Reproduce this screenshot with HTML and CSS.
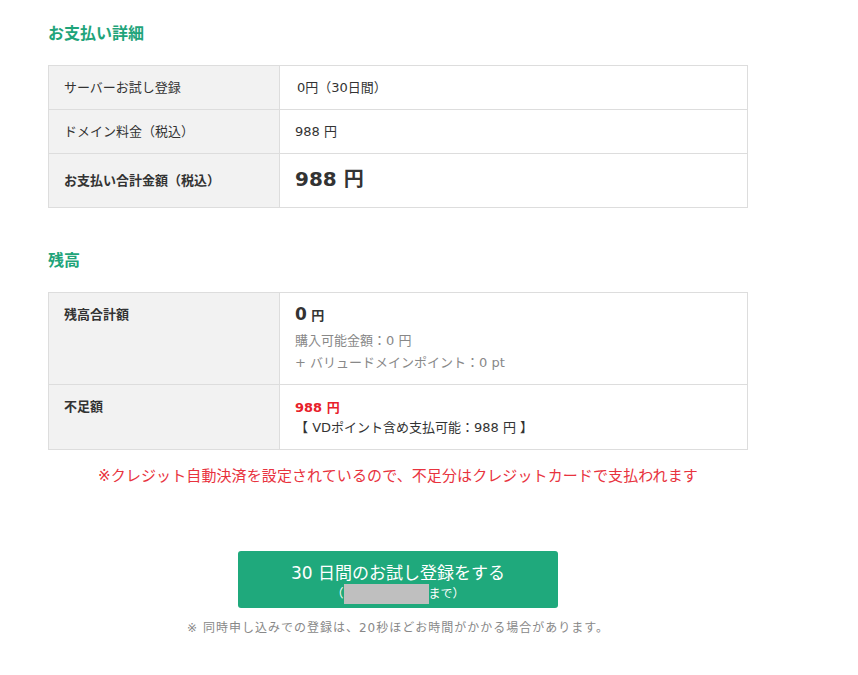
FILE: index.html
```html
<!DOCTYPE html>
<html lang="ja">
<head>
    <meta charset="UTF-8">
    <meta name="viewport" content="width=device-width, initial-scale=1.0">
    <title>お支払い詳細</title>
    <link rel="stylesheet" href="styles.css">
</head>
<body>
    <div class="container">
        <h2 class="section-title">お支払い詳細</h2>
        <table class="detail-table">
            <tr>
                <th>サーバーお試し登録</th>
                <td><span class="trial">0円（30日間）</span></td>
            </tr>
            <tr>
                <th>ドメイン料金（税込）</th>
                <td>988 円</td>
            </tr>
            <tr class="total-row">
                <th class="strong">お支払い合計金額（税込）</th>
                <td><span class="total">988 円</span></td>
            </tr>
        </table>

        <h2 class="section-title balance-title">残高</h2>
        <table class="detail-table balance-table">
            <tr>
                <th class="strong top">残高合計額</th>
                <td>
                    <div class="balance"><span class="balance-num">0</span> 円</div>
                    <div class="sub">購入可能金額：0 円</div>
                    <div class="sub">+ バリュードメインポイント：0 pt</div>
                </td>
            </tr>
            <tr>
                <th class="strong top">不足額</th>
                <td>
                    <div class="shortage">988 円</div>
                    <div>【 VDポイント含め支払可能：988 円 】</div>
                </td>
            </tr>
        </table>

        <p class="notice">※クレジット自動決済を設定されているので、不足分はクレジットカードで支払われます</p>

        <div class="actions">
            <button class="submit-button">
                <span class="submit-main">30 日間のお試し登録をする</span>
                <span class="submit-sub">（<span class="masked"></span>まで）</span>
            </button>
            <p class="note">※ 同時申し込みでの登録は、20秒ほどお時間がかかる場合があります。</p>
        </div>
    </div>
</body>
</html>
```

FILE: styles.css
```css
body {
    font-family: "DejaVu Sans", "Noto Sans CJK JP", sans-serif;
    margin: 0;
    color: #333;
    font-size: 13px;
    background: #fff;
}
.container {
    width: 700px;
    padding: 22px 0 0 48px;
}
.section-title {
    font-size: 16px;
    font-weight: bold;
    color: #1fa47a;
    margin: 0 0 19px 0;
    line-height: 24px;
}
.balance-title {
    margin-top: 41px;
}
.detail-table {
    width: 700px;
    border-collapse: collapse;
    border: 1px solid #ddd;
}
.detail-table th,
.detail-table td {
    border: 1px solid #ddd;
    text-align: left;
    padding: 0 15px;
    height: 43px;
    font-weight: normal;
    line-height: 20px;
}
.detail-table th {
    width: 200px;
    background: #f2f2f2;
}
.detail-table .strong {
    font-weight: bold;
}
.detail-table .top {
    vertical-align: top;
    padding-top: 12px;
}
.trial {
    padding-left: 2px;
}
.total-row th,
.total-row td {
    height: 53px;
}
.total {
    font-size: 20px;
    font-weight: bold;
}
.balance-table td {
    padding-top: 11px;
    padding-bottom: 10px;
}
.balance {
    font-weight: bold;
    margin-bottom: 4px;
}
.balance-num {
    font-size: 17px;
}
.sub {
    color: #888;
    line-height: 22px;
}
.shortage {
    color: #e8202a;
    font-weight: bold;
    line-height: 20px;
}
.notice {
    color: #e8333e;
    font-size: 15px;
    text-align: center;
    letter-spacing: 0.1px;
    margin: 14px 0 0 0;
}
.actions {
    display: flex;
    flex-direction: column;
    align-items: center;
    margin-top: 66px;
}
.submit-button {
    display: flex;
    flex-direction: column;
    align-items: center;
    width: 320px;
    height: 57px;
    padding: 11px 0 0 0;
    background: #1fa97c;
    color: #fff;
    border: none;
    border-radius: 3px;
    font-family: inherit;
    cursor: pointer;
}
.submit-main {
    font-size: 17px;
    line-height: 22px;
}
.submit-sub {
    display: flex;
    align-items: center;
    font-size: 12px;
    line-height: 18px;
}
.masked {
    display: inline-block;
    width: 85px;
    height: 20px;
    background: #bfbfbf;
}
.note {
    color: #888;
    font-size: 12px;
    letter-spacing: 1px;
    margin: 10px 0 0 0;
}
```
